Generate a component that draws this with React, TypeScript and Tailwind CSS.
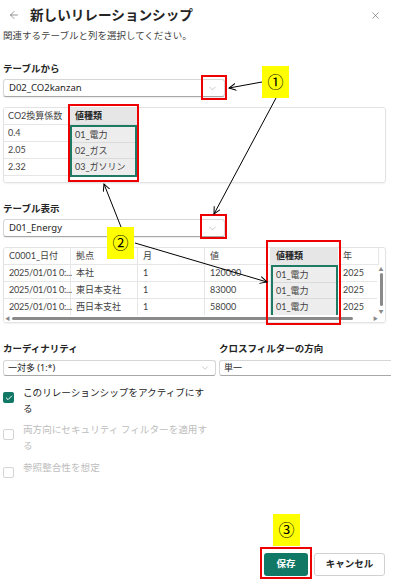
import { ChevronDown, ArrowLeft, X, Check } from "lucide-react";

const font = { fontFamily: '"Noto Sans", "Noto Sans CJK JP", sans-serif' };
const tableFont = { fontFamily: 'Lato, "Noto Sans CJK JP", sans-serif' };

function Dropdown({ value, w }: { value: string; w: string }) {
  return (
    <div
      className={`${w} h-[18px] flex items-center justify-between pl-[5px] pr-[6px] bg-white border border-[#d6d6d6] border-b-[#a8a8a8] rounded-[3px] shadow-[0_1px_1px_rgba(0,0,0,0.08)]`}
    >
      <span className="text-[9.5px] text-[#242424]">{value}</span>
      <ChevronDown size={11} strokeWidth={1.2} className="text-[#9a9a9a]" />
    </div>
  );
}

function Table1() {
  const rows = [
    ["0.4", "01_電力"],
    ["2.05", "02_ガス"],
    ["2.32", "03_ガソリン"],
  ];
  return (
    <div
      className="mt-[10px] h-[76px] w-[383px] border border-[#e3e3e3] rounded-[3px] shadow-[0_1px_2px_rgba(0,0,0,0.06)] flex text-[9px] text-[#424242]"
      style={tableFont}
    >
      <div className="w-[66px] flex flex-col">
        <div className="h-[17px] flex items-center px-[4px] border-b border-r border-[#e6e6e6]">CO2換算係数</div>
        {rows.map((r) => (
          <div key={r[0]} className="h-[17px] flex items-center px-[4px] border-b border-r border-[#e6e6e6]">
            {r[0]}
          </div>
        ))}
      </div>
      <div className="w-[67px] flex flex-col">
        <div className="h-[17px] flex items-center px-[5px] bg-[#e6e6e6] font-bold text-[#242424] border-b border-[#dcdcdc]">
          値種類
        </div>
        <div className="flex flex-col border-2 border-[#1f7a63] bg-[#ededed]">
          {rows.map((r, i) => (
            <div
              key={r[1]}
              className={`h-[16px] flex items-center px-[3px] ${i < 2 ? "border-b border-[#dadada]" : ""}`}
            >
              {r[1]}
            </div>
          ))}
        </div>
      </div>
    </div>
  );
}

function Table2() {
  const head = ["C0001_日付", "拠点", "月", "値", "値種類", "年"];
  const rows = [
    ["2025/01/01 0:...", "本社", "1", "120000", "01_電力", "2025"],
    ["2025/01/01 0:...", "東日本支社", "1", "83000", "01_電力", "2025"],
    ["2025/01/01 0:...", "西日本支社", "1", "58000", "01_電力", "2025"],
  ];
  const widths = ["w-[67px]", "w-[67px]", "w-[67px]", "w-[66px]", "w-[67px]", "w-[41px]"];
  return (
    <div
      className="mt-[10px] h-[76px] w-[383px] border border-[#e3e3e3] rounded-[3px] shadow-[0_1px_2px_rgba(0,0,0,0.06)] flex flex-col text-[9px] text-[#424242] relative overflow-hidden"
      style={tableFont}
    >
      <div className="flex h-[17px]">
        {head.map((h, i) => (
          <div
            key={h}
            className={`${widths[i]} h-full flex items-center px-[5px] border-b border-[#e6e6e6] ${
              i === 4 ? "bg-[#e6e6e6] font-bold text-[#242424]" : "border-r"
            }`}
          >
            {h}
          </div>
        ))}
      </div>
      <div className="flex">
        {[0, 1, 2, 3].map((c) => (
          <div key={c} className={`${widths[c]} flex flex-col`}>
            {rows.map((r, ri) => (
              <div
                key={ri}
                className={`h-[17px] flex items-center border-b border-r border-[#e6e6e6] whitespace-nowrap ${
                  c === 0 ? "pl-[5px] pr-[2px] tracking-[-0.2px]" : "px-[5px]"
                }`}
              >
                {r[c]}
              </div>
            ))}
          </div>
        ))}
        <div className="w-[67px] flex flex-col border-2 border-[#1f7a63] bg-[#ededed]">
          {rows.map((r, ri) => (
            <div key={ri} className={`h-[16px] flex items-center px-[3px] ${ri < 2 ? "border-b border-[#dadada]" : ""}`}>
              {r[4]}
            </div>
          ))}
        </div>
        <div className="w-[41px] flex flex-col">
          {rows.map((r, ri) => (
            <div key={ri} className="h-[17px] flex items-center px-[5px] border-b border-[#e6e6e6]">
              {r[5]}
            </div>
          ))}
        </div>
      </div>
      {/* vertical scrollbar */}
      <div className="absolute right-0 top-[17px] w-[8px] h-[52px] flex flex-col items-center bg-white">
        <span className="text-[5px] leading-[6px] text-[#8a8a8a] mt-[1px]">▲</span>
        <div className="w-[3px] h-[33px] bg-[#8a8a8a] rounded-full mt-[1px]" />
        <span className="text-[5px] leading-[6px] text-[#8a8a8a] mt-[2px]">▼</span>
      </div>
      {/* horizontal scrollbar */}
      <div className="absolute left-0 bottom-0 w-full h-[7px] flex items-center px-[1px] bg-white">
        <span className="text-[5px] text-[#8a8a8a]">◀</span>
        <div className="ml-[2px] w-[341px] h-[3px] bg-[#8a8a8a] rounded-full" />
        <span className="ml-auto mr-[6px] text-[5px] text-[#8a8a8a]">▶</span>
      </div>
    </div>
  );
}

function CheckRow({ checked, disabled, label, mt }: { checked?: boolean; disabled?: boolean; label: string; mt: string }) {
  return (
    <div className={`${mt} flex items-start`}>
      <div
        className={`mt-[7px] w-[11px] h-[11px] rounded-[2px] flex items-center justify-center ${
          checked ? "bg-[#117865]" : "border border-[#d4d4d4] bg-white"
        }`}
      >
        {checked && <Check size={8} strokeWidth={3} className="text-white" />}
      </div>
      <span
        className={`ml-[9px] w-[188px] text-[9.6px] leading-[16px] ${disabled ? "text-[#bdbdbd]" : "text-[#242424]"}`}
      >
        {label}
      </span>
    </div>
  );
}

function Badge({ text, cls }: { text: string; cls: string }) {
  return (
    <div className={`absolute ${cls} w-[27px] h-[32px] bg-[#ffff00] flex items-center justify-center text-[16px] text-black`}>
      {text}
    </div>
  );
}

function RedBox({ cls }: { cls: string }) {
  return <div className={`absolute ${cls} border-2 border-[#ee0000]`} />;
}

export default function App() {
  return (
    <div className="relative w-[394px] h-[587px] bg-white overflow-hidden" style={font}>
      <div className="flex flex-col px-[3px] h-full">
        {/* header */}
        <div className="h-[30px] flex items-center">
          <ArrowLeft size={12} strokeWidth={1.3} className="ml-[5px] text-[#616161]" />
          <span className="ml-[10px] text-[13.6px] font-bold text-[#242424]">新しいリレーションシップ</span>
          <X size={11} strokeWidth={1.3} className="ml-auto mr-[10px] text-[#616161]" />
        </div>
        <div className="h-[13px] flex items-center text-[9.5px] text-[#424242]">関連するテーブルと列を選択してください。</div>

        <div className="mt-[19px] h-[14px] flex items-center text-[9.5px] font-bold text-[#242424]">テーブルから</div>
        <div className="mt-[3px]">
          <Dropdown value="D02_CO2kanzan" w="w-[222px]" />
        </div>
        <Table1 />

        <div className="mt-[19px] h-[14px] flex items-center text-[9.5px] font-bold text-[#242424]">テーブル表示</div>
        <div className="mt-[3px]">
          <Dropdown value="D01_Energy" w="w-[222px]" />
        </div>
        <Table2 />

        <div className="mt-[19px] h-[14px] flex items-center text-[9.5px] font-bold text-[#242424]">
          <span className="w-[216px]">カーディナリティ</span>
          <span>クロスフィルターの方向</span>
        </div>
        <div className="mt-[4px] flex gap-[3px]">
          <div className="w-[213px] h-[16px] flex items-center justify-between pl-[4px] pr-[5px] border border-[#d6d6d6] border-b-[#a8a8a8] rounded-[3px]">
            <span className="text-[9px] text-[#242424]">一対多 (1:*)</span>
            <ChevronDown size={10} strokeWidth={1.2} className="text-[#9a9a9a]" />
          </div>
          <div className="flex-1 h-[16px] flex items-center pl-[4px] border border-[#d6d6d6] border-b-[#a8a8a8] rounded-l-[3px] border-r-0">
            <span className="text-[9px] text-[#242424]">単一</span>
          </div>
        </div>

        <CheckRow checked label="このリレーションシップをアクティブにする" mt="mt-[9px]" />
        <CheckRow disabled label="両方向にセキュリティ フィルターを適用する" mt="mt-[5px]" />
        <CheckRow disabled label="参照整合性を想定" mt="mt-[6px]" />

        <div className="mt-auto mb-[11px] flex justify-end gap-[6px] pr-[6px]">
          <button className="w-[44px] h-[23px] rounded-[3px] bg-[#117865] text-white text-[9.5px] font-bold">保存</button>
          <button className="w-[71px] h-[23px] rounded-[3px] border border-[#d1d1d1] bg-white text-[#242424] text-[9.5px] font-bold">
            キャンセル
          </button>
        </div>
      </div>

      {/* annotations */}
      <RedBox cls="left-[201px] top-[75px] w-[26px] h-[25px]" />
      <RedBox cls="left-[68px] top-[104px] w-[71px] h-[78px]" />
      <RedBox cls="left-[200px] top-[214px] w-[27px] h-[25px]" />
      <RedBox cls="left-[266px] top-[240px] w-[75px] h-[85px]" />
      <RedBox cls="left-[260px] top-[547px] w-[52px] h-[32px]" />

      <Badge text="①" cls="left-[262px] top-[66px]" />
      <Badge text="②" cls="left-[107px] top-[227px]" />
      <Badge text="③" cls="left-[273px] top-[514px]" />

      <svg className="absolute inset-0 pointer-events-none" width={394} height={587}>
        <defs>
          <marker id="ah" markerWidth="8" markerHeight="8" refX="7" refY="4" orient="auto" markerUnits="userSpaceOnUse">
            <path d="M0,0.5 L7,4 L0,7.5" fill="none" stroke="#000" strokeWidth="1" />
          </marker>
        </defs>
        <g stroke="#000" strokeWidth="1" fill="none">
          <line x1="262" y1="82" x2="229" y2="88" markerEnd="url(#ah)" />
          <line x1="276" y1="98" x2="214" y2="214" markerEnd="url(#ah)" />
          <line x1="121" y1="227" x2="104" y2="184" markerEnd="url(#ah)" />
          <line x1="135" y1="243" x2="267" y2="282" markerEnd="url(#ah)" />
        </g>
      </svg>
    </div>
  );
}
